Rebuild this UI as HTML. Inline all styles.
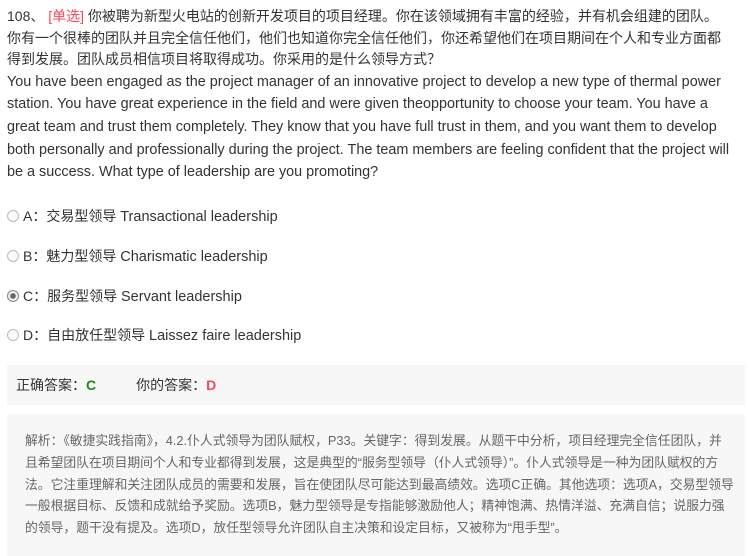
<!DOCTYPE html>
<html><head><meta charset="utf-8"><style>
body{margin:0;width:749px;height:556px;background:#fff;font-family:"Liberation Sans","Noto Sans CJK SC",sans-serif;color:#333;overflow:hidden;position:relative}
.q{position:absolute;left:7px;top:6px;font-size:14px;line-height:21.6px;white-space:nowrap}
.en{font-size:14.4px}
.red{color:#f5475a}
.opt{position:absolute;left:7px;font-size:14px;white-space:nowrap;line-height:20px}
.opt .e{font-size:14.5px}
.radio{display:inline-block;width:12px;height:12px;border:1px solid #bbb;border-radius:50%;vertical-align:-1px;margin-right:4px;box-sizing:border-box;background:#fafafa}
.radio.on{border-color:#888;background:radial-gradient(circle,#666 0 2.5px,#eee 3px)}
.ans{position:absolute;left:7px;top:365px;width:738px;height:40px;background:#f7f7f7;font-size:14px;line-height:40px}
.ana{position:absolute;left:7px;top:414px;width:738px;height:142px;background:#f7f7f7}
.ana div{position:absolute;left:18px;top:16px;font-size:12.8px;line-height:21.8px;color:#666;white-space:nowrap}
</style></head><body>
<div class="q">108、 <span class="red">[单选]</span> 你被聘为新型火电站的创新开发项目的项目经理。你在该领域拥有丰富的经验，并有机会组建的团队。<br>你有一个很棒的团队并且完全信任他们，他们也知道你完全信任他们，你还希望他们在项目期间在个人和专业方面都<br>得到发展。团队成员相信项目将取得成功。你采用的是什么领导方式？<br><span class="en">You have been engaged as the project manager of an innovative project to develop a new type of thermal power<br>station. You have great experience in the field and were given theopportunity to choose your team. You have a<br>great team and trust them completely. They know that you have full trust in them, and you want them to develop<br>both personally and professionally during the project. The team members are feeling confident that the project will<br>be a success. What type of leadership are you promoting?</span></div>
<div class="opt" style="top:206px"><span class="radio"></span>A：交易型领导 <span class="e">Transactional leadership</span></div>
<div class="opt" style="top:246px"><span class="radio"></span>B：魅力型领导 <span class="e">Charismatic leadership</span></div>
<div class="opt" style="top:286px"><span class="radio on"></span>C：服务型领导 <span class="e">Servant leadership</span></div>
<div class="opt" style="top:325px"><span class="radio"></span>D：自由放任型领导 <span class="e">Laissez faire leadership</span></div>
<div class="ans"><span style="margin-left:9px">正确答案：</span><b style="color:#1a8a1a">C</b><span style="margin-left:40px">你的答案：</span><b style="color:#f5475a">D</b></div>
<div class="ana"><div>解析：《敏捷实践指南》，4.2.仆人式领导为团队赋权，P33。关键字：得到发展。从题干中分析，项目经理完全信任团队，并<br>且希望团队在项目期间个人和专业都得到发展，这是典型的“服务型领导（仆人式领导）”。仆人式领导是一种为团队赋权的方<br>法。它注重理解和关注团队成员的需要和发展，旨在使团队尽可能达到最高绩效。选项C正确。其他选项：选项A，交易型领导<br>一般根据目标、反馈和成就给予奖励。选项B，魅力型领导是专指能够激励他人；精神饱满、热情洋溢、充满自信；说服力强<br>的领导，题干没有提及。选项D，放任型领导允许团队自主决策和设定目标，又被称为“甩手型”。</div></div>
</body></html>
